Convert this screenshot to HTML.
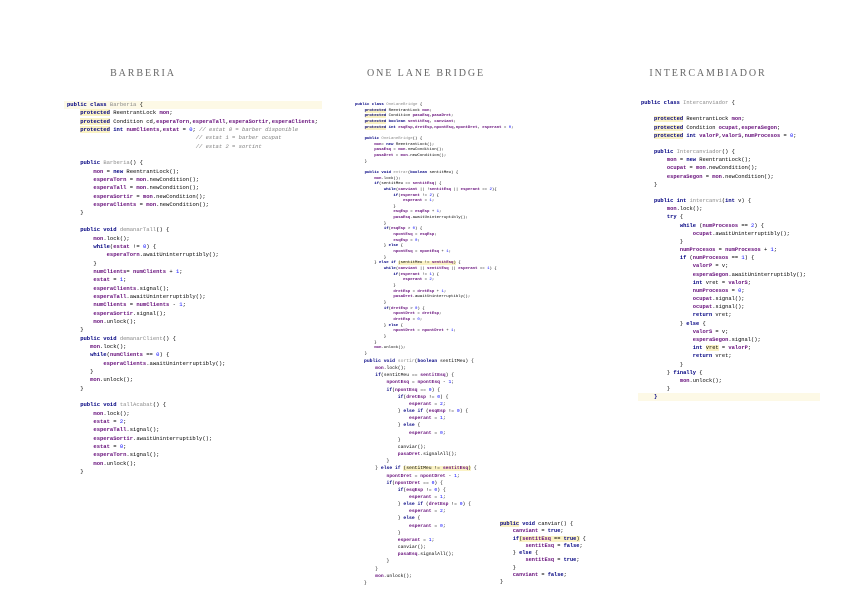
<!DOCTYPE html>
<html><head><meta charset="utf-8"><style>
html,body{margin:0;padding:0;background:#fff;width:848px;height:599px;overflow:hidden;position:relative}
.t{position:absolute;font-family:"Liberation Serif",serif;font-size:10px;letter-spacing:1.9px;color:#666;top:68px;width:200px;text-align:center}
pre{position:absolute;margin:0;font-family:"Liberation Mono",monospace;color:#000}
.k{color:#000080;font-weight:bold}
.f{color:#660e7a;font-weight:bold}
.n{color:#0000ff}
.c{color:#808080;font-style:italic}
.g{color:#8a8a8a}
.h{background:#fbf3c5}
.hl{position:absolute;background:#fdf9e6}
</style></head><body>
<div class="t" style="left:43px">BARBERIA</div>
<div class="t" style="left:326px">ONE LANE BRIDGE</div>
<div class="t" style="left:608px">INTERCAMBIADOR</div>

<div class="hl" style="left:64px;top:101px;width:258px;height:8px"></div>
<pre style="left:67px;top:101px;font-size:5.5px;line-height:8.35px"><span class="k">public class</span> <span class="g">Barberia</span> {
    <span class="k h">protected</span> ReentrantLock <span class="f">mon</span>;
    <span class="k h">protected</span> Condition cd,<span class="f">esperaTorn</span>,<span class="f">esperaTall</span>,<span class="f">esperaSortir</span>,<span class="f">esperaClients</span>;
    <span class="k h">protected</span> <span class="k">int</span> <span class="f">numClients</span>,<span class="f">estat</span> = <span class="n">0</span>; <span class="c">// estat 0 = barber disponible</span>
                                       <span class="c">// estat 1 = barber ocupat</span>
                                       <span class="c">// estat 2 = sortint</span>

    <span class="k">public</span> <span class="g">Barberia</span>() {
        <span class="f">mon</span> = <span class="k">new</span> ReentrantLock();
        <span class="f">esperaTorn</span> = <span class="f">mon</span>.newCondition();
        <span class="f">esperaTall</span> = <span class="f">mon</span>.newCondition();
        <span class="f">esperaSortir</span> = <span class="f">mon</span>.newCondition();
        <span class="f">esperaClients</span> = <span class="f">mon</span>.newCondition();
    }

    <span class="k">public void</span> <span class="g">demanarTall</span>() {
        <span class="f">mon</span>.lock();
        <span class="k">while</span>(<span class="f">estat</span> != <span class="n">0</span>) {
            <span class="f">esperaTorn</span>.awaitUninterruptibly();
        }
        <span class="f">numClients</span>= <span class="f">numClients</span> + <span class="n">1</span>;
        <span class="f">estat</span> = <span class="n">1</span>;
        <span class="f">esperaClients</span>.signal();
        <span class="f">esperaTall</span>.awaitUninterruptibly();
        <span class="f">numClients</span> = <span class="f">numClients</span> - <span class="n">1</span>;
        <span class="f">esperaSortir</span>.signal();
        <span class="f">mon</span>.unlock();
    }
    <span class="k">public void</span> <span class="g">demanarClient</span>() {
       <span class="f">mon</span>.lock();
       <span class="k">while</span>(<span class="f">numClients</span> == <span class="n">0</span>) {
           <span class="f">esperaClients</span>.awaitUninterruptibly();
       }
       <span class="f">mon</span>.unlock();
    }

    <span class="k">public void</span> <span class="g">tallAcabat</span>() {
        <span class="f">mon</span>.lock();
        <span class="f">estat</span> = <span class="n">2</span>;
        <span class="f">esperaTall</span>.signal();
        <span class="f">esperaSortir</span>.awaitUninterruptibly();
        <span class="f">estat</span> = <span class="n">0</span>;
        <span class="f">esperaTorn</span>.signal();
        <span class="f">mon</span>.unlock();
    }</pre>

<pre style="left:355px;top:103px;font-size:4px;line-height:5.66px"><span class="k">public class</span> <span class="g">OneLaneBridge</span> {
    <span class="k h">protected</span> ReentrantLock <span class="f">mon</span>;
    <span class="k h">protected</span> Condition <span class="f">pasaEsq</span>,<span class="f">pasaDret</span>;
    <span class="k h">protected</span> <span class="k">boolean</span> <span class="f">sentitEsq</span>, <span class="f">canviant</span>;
    <span class="k h">protected</span> <span class="k">int</span> <span class="f">esqEsp</span>,<span class="f">dretEsp</span>,<span class="f">npontEsq</span>,<span class="f">npontDret</span>, <span class="f">esperant</span> = <span class="n">0</span>;

    <span class="k">public</span> <span class="g">OneLaneBridge</span>() {
        <span class="f">mon</span>= <span class="k">new</span> ReentrantLock();
        <span class="f">pasaEsq</span> = <span class="f">mon</span>.newCondition();
        <span class="f">pasaDret</span> = <span class="f">mon</span>.newCondition();
    }

    <span class="k">public void</span> <span class="g">entrar</span>(<span class="k">boolean</span> sentitMeu) {
        <span class="f">mon</span>.lock();
        <span class="k">if</span>(sentitMeu == <span class="f">sentitEsq</span>) {
            <span class="k">while</span>(<span class="f">canviant</span> || !<span class="f">sentitEsq</span> || <span class="f">esperant</span> == <span class="n">2</span>){
                <span class="k">if</span>(<span class="f">esperant</span> != <span class="n">2</span>) {
                    <span class="f">esperant</span> = <span class="n">1</span>;
                }
                <span class="f">esqEsp</span> = <span class="f">esqEsp</span> + <span class="n">1</span>;
                <span class="f">pasaEsq</span>.awaitUninterruptibly();
            }
            <span class="k">if</span>(<span class="f">esqEsp</span> > <span class="n">0</span>) {
                <span class="f">npontEsq</span> = <span class="f">esqEsp</span>;
                <span class="f">esqEsp</span> = <span class="n">0</span>;
            } <span class="k">else</span> {
                <span class="f">npontEsq</span> = <span class="f">npontEsq</span> + <span class="n">1</span>;
            }
        } <span class="k">else if</span> <span class="h">(sentitMeu != <span class="f">sentitEsq</span>)</span> {
            <span class="k">while</span>(<span class="f">canviant</span> || <span class="f">sentitEsq</span> || <span class="f">esperant</span> == <span class="n">1</span>) {
                <span class="k">if</span>(<span class="f">esperant</span> != <span class="n">1</span>) {
                    <span class="f">esperant</span> = <span class="n">2</span>;
                }
                <span class="f">dretEsp</span> = <span class="f">dretEsp</span> + <span class="n">1</span>;
                <span class="f">pasaDret</span>.awaitUninterruptibly();
            }
            <span class="k">if</span>(<span class="f">dretEsp</span> > <span class="n">0</span>) {
                <span class="f">npontDret</span> = <span class="f">dretEsp</span>;
                <span class="f">dretEsp</span> = <span class="n">0</span>;
            } <span class="k">else</span> {
                <span class="f">npontDret</span> = <span class="f">npontDret</span> + <span class="n">1</span>;
            }
        }
        <span class="f">mon</span>.unlock();
    }</pre>

<pre style="left:364px;top:358px;font-size:4.7px;line-height:7.16px"><span class="k">public void</span> <span class="g">sortir</span>(<span class="k">boolean</span> sentitMeu) {
    <span class="f">mon</span>.lock();
    <span class="k">if</span>(sentitMeu == <span class="f">sentitEsq</span>) {
        <span class="f">npontEsq</span> = <span class="f">npontEsq</span> - <span class="n">1</span>;
        <span class="k">if</span>(<span class="f">npontEsq</span> == <span class="n">0</span>) {
            <span class="k">if</span>(<span class="f">dretEsp</span> != <span class="n">0</span>) {
                <span class="f">esperant</span> = <span class="n">2</span>;
            } <span class="k">else if</span> (<span class="f">esqEsp</span> != <span class="n">0</span>) {
                <span class="f">esperant</span> = <span class="n">1</span>;
            } <span class="k">else</span> {
                <span class="f">esperant</span> = <span class="n">0</span>;
            }
            canviar();
            <span class="f">pasaDret</span>.signalAll();
        }
    } <span class="k">else if</span> <span class="h">(sentitMeu != <span class="f">sentitEsq</span>)</span> {
        <span class="f">npontDret</span> = <span class="f">npontDret</span> - <span class="n">1</span>;
        <span class="k">if</span>(<span class="f">npontDret</span> == <span class="n">0</span>) {
            <span class="k">if</span>(<span class="f">esqEsp</span> != <span class="n">0</span>) {
                <span class="f">esperant</span> = <span class="n">1</span>;
            } <span class="k">else if</span> (<span class="f">dretEsp</span> != <span class="n">0</span>) {
                <span class="f">esperant</span> = <span class="n">2</span>;
            } <span class="k">else</span> {
                <span class="f">esperant</span> = <span class="n">0</span>;
            }
            <span class="f">esperant</span> = <span class="n">1</span>;
            canviar();
            <span class="f">pasaEsq</span>.signalAll();
        }
    }
    <span class="f">mon</span>.unlock();
}</pre>

<pre style="left:500px;top:521px;font-size:5.3px;line-height:7.3px"><span class="k h">public</span> <span class="k">void</span> canviar() {
    <span class="f">canviant</span> = <span class="k">true</span>;
    <span class="k">if</span><span class="h">(<span class="f">sentitEsq</span> == <span class="k">true</span>)</span> {
        <span class="f">sentitEsq</span> = <span class="k">false</span>;
    } <span class="k">else</span> {
        <span class="f">sentitEsq</span> = <span class="k">true</span>;
    }
    <span class="f">canviant</span> = <span class="k">false</span>;
}</pre>

<div class="hl" style="left:638px;top:393px;width:182px;height:8px"></div>
<pre style="left:641px;top:99px;font-size:5.4px;line-height:8.17px"><span class="k">public class</span> <span class="g">Intercanviador</span> {

    <span class="k h">protected</span> ReentrantLock <span class="f">mon</span>;
    <span class="k h">protected</span> Condition <span class="f">ocupat</span>,<span class="f">esperaSegon</span>;
    <span class="k h">protected</span> <span class="k">int</span> <span class="f">valorP</span>,<span class="f">valorS</span>,<span class="f">numProcesos</span> = <span class="n">0</span>;

    <span class="k">public</span> <span class="g">Intercanviador</span>() {
        <span class="f">mon</span> = <span class="k">new</span> ReentrantLock();
        <span class="f">ocupat</span> = <span class="f">mon</span>.newCondition();
        <span class="f">esperaSegon</span> = <span class="f">mon</span>.newCondition();
    }

    <span class="k">public int</span> <span class="g">intercanvi</span>(<span class="k">int</span> v) {
        <span class="f">mon</span>.lock();
        <span class="k">try</span> {
            <span class="k">while</span> (<span class="f">numProcesos</span> == <span class="n">2</span>) {
                <span class="f">ocupat</span>.awaitUninterruptibly();
            }
            <span class="f">numProcesos</span> = <span class="f">numProcesos</span> + <span class="n">1</span>;
            <span class="k">if</span> (<span class="f">numProcesos</span> == <span class="n">1</span>) {
                <span class="f">valorP</span> = v;
                <span class="f">esperaSegon</span>.awaitUninterruptibly();
                <span class="k">int</span> vret = <span class="f">valorS</span>;
                <span class="f">numProcesos</span> = <span class="n">0</span>;
                <span class="f">ocupat</span>.signal();
                <span class="f">ocupat</span>.signal();
                <span class="k">return</span> vret;
            } <span class="k">else</span> {
                <span class="f">valorS</span> = v;
                <span class="f">esperaSegon</span>.signal();
                <span class="k">int</span> <span class="h">vret</span> = <span class="f">valorP</span>;
                <span class="k">return</span> vret;
            }
        } <span class="k">finally</span> {
            <span class="f">mon</span>.unlock();
        }
    <span class="k">}</span></pre>
</body></html>
